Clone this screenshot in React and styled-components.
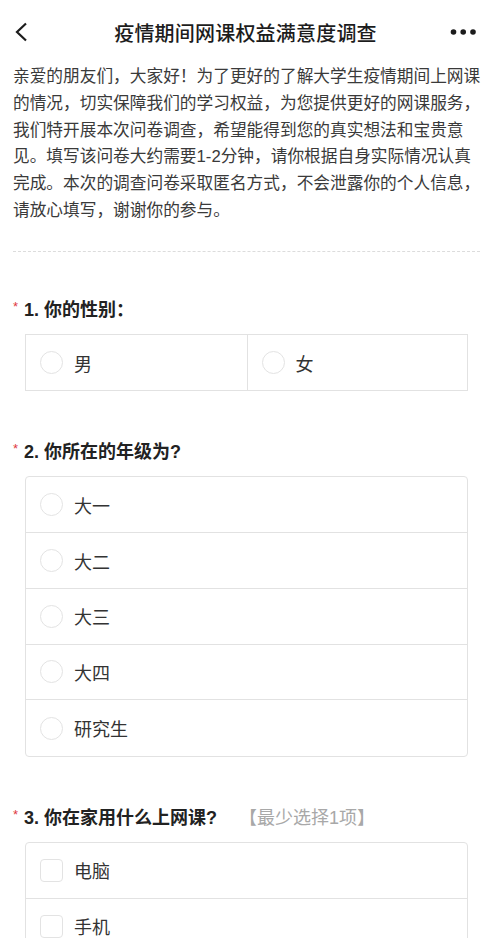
import React from 'react';
import styled, { createGlobalStyle } from 'styled-components';

const GlobalStyle = createGlobalStyle`
	* {
		box-sizing: border-box;
	}
	body {
		margin: 0;
		background: #fff;
		font-family: 'Liberation Sans', 'Noto Sans CJK SC', sans-serif;
		color: #333;
	}
`;

const PageStyled = styled.div`
	width: 100%;
	min-height: 100vh;
	background: #fff;
	padding-bottom: 40px;
`;

const HeaderStyled = styled.div`
	display: grid;
	grid-template-columns: 60px 1fr 60px;
	align-items: center;
	height: 64px;
	padding: 0 16px 0 14px;

	.header-title {
		margin: 0;
		text-align: center;
		font-size: 20px;
		font-weight: 500;
		color: #1c1c1c;
		letter-spacing: 0.2px;
	}
`;

const IconButton = styled.button`
	display: flex;
	align-items: center;
	justify-content: ${(p) => (p.$end ? 'flex-end' : 'flex-start')};
	padding: 0;
	border: none;
	background: none;
	height: 24px;
`;

const IntroStyled = styled.div`
	padding: 0 13px;
	font-size: 16.7px;
	line-height: 26.8px;
	color: #3a3a3a;

	span {
		display: block;
		white-space: nowrap;
	}
`;

const DividerStyled = styled.div`
	margin: 26px 13px 44px;
	border-top: 1px dashed #dcdcdc;
`;

const QuestionStyled = styled.div`
	padding: 0 13px;
	margin-bottom: 47px;
`;

const QuestionTitle = styled.div`
	display: flex;
	align-items: center;
	height: 24px;
	margin-bottom: 14px;
	font-size: 18px;
	font-weight: 700;
	color: #222;

	.star {
		color: #e0383e;
		font-size: 13px;
		font-weight: 400;
		margin-right: 6px;
		margin-top: -3px;
	}

	.hint {
		margin-left: 22px;
		color: #a8a8a8;
		font-weight: 400;
	}
`;

const OptionBox = styled.div`
	display: grid;
	grid-template-columns: ${(p) => (p.$cols === 2 ? '1fr 1fr' : '1fr')};
	margin: 0 12px;
	border: 1px solid #e2e2e2;
	border-radius: ${(p) => (p.$cols === 2 ? '0' : '4px')};
	overflow: hidden;
`;

const OptionRow = styled.label`
	display: flex;
	align-items: center;
	gap: 11px;
	height: 55.7px;
	padding-left: 14px;
	font-size: 18px;
	color: #333;
	border-bottom: ${(p) => (p.$last ? 'none' : '1px solid #e2e2e2')};
	border-left: ${(p) => (p.$divided ? '1px solid #e2e2e2' : 'none')};
`;

const Marker = styled.span`
	width: 23px;
	height: 23px;
	flex-shrink: 0;
	border: 1px solid #e3e3e3;
	border-radius: ${(p) => (p.$square ? '4px' : '50%')};
	background: #fff;
`;

const introLines = [
	'亲爱的朋友们，大家好！为了更好的了解大学生疫情期间上网课',
	'的情况，切实保障我们的学习权益，为您提供更好的网课服务，',
	'我们特开展本次问卷调查，希望能得到您的真实想法和宝贵意',
	'见。填写该问卷大约需要1-2分钟，请你根据自身实际情况认真',
	'完成。本次的调查问卷采取匿名方式，不会泄露你的个人信息，',
	'请放心填写，谢谢你的参与。',
];

const questions = [
	{ id: 1, title: '你的性别：', cols: 2, options: ['男', '女'] },
	{
		id: 2,
		title: '你所在的年级为?',
		options: ['大一', '大二', '大三', '大四', '研究生'],
	},
	{
		id: 3,
		title: '你在家用什么上网课?',
		hint: '【最少选择1项】',
		multi: true,
		options: ['电脑', '手机'],
	},
];

export default function App() {
	return (
		<PageStyled>
			<GlobalStyle />
			<HeaderStyled>
				<IconButton>
					<svg width='16' height='20' viewBox='0 0 16 20'>
						<polyline
							points='12,1.5 3,10 12,18.5'
							fill='none'
							stroke='#1c1c1c'
							strokeWidth='2.2'
						/>
					</svg>
				</IconButton>
				<p className='header-title'>疫情期间网课权益满意度调查</p>
				<IconButton $end>
					<svg width='27' height='8' viewBox='0 0 27 8'>
						<circle cx='3.5' cy='4' r='2.8' fill='#1c1c1c' />
						<circle cx='13.2' cy='4' r='2.8' fill='#1c1c1c' />
						<circle cx='23' cy='4' r='2.8' fill='#1c1c1c' />
					</svg>
				</IconButton>
			</HeaderStyled>

			<IntroStyled>
				{introLines.map((line) => (
					<span key={line}>{line}</span>
				))}
			</IntroStyled>

			<DividerStyled />

			{questions.map((q) => (
				<QuestionStyled key={q.id}>
					<QuestionTitle>
						<span className='star'>*</span>
						<span>
							{q.id}. {q.title}
						</span>
						{q.hint && <span className='hint'>{q.hint}</span>}
					</QuestionTitle>
					<OptionBox $cols={q.cols}>
						{q.options.map((opt, i) => (
							<OptionRow
								key={opt}
								$last={q.cols === 2 || i === q.options.length - 1}
								$divided={q.cols === 2 && i > 0}>
								<Marker $square={q.multi} />
								{opt}
							</OptionRow>
						))}
					</OptionBox>
				</QuestionStyled>
			))}
		</PageStyled>
	);
}
